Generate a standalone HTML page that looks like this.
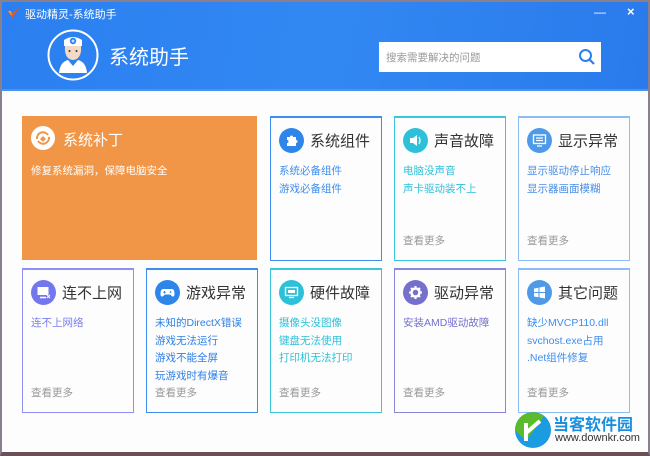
<!DOCTYPE html>
<html><head><meta charset="utf-8"><style>
*{margin:0;padding:0;box-sizing:border-box}
body{width:650px;height:456px;overflow:hidden;background:#fff;font-family:"Liberation Sans","Noto Sans CJK SC",sans-serif;position:relative}
.frame{position:absolute;left:0;top:0;width:650px;height:456px;border:2px solid #8a7f8c;border-bottom:4px solid #6b5058;background:#fdfdfe}
.hdr{position:absolute;left:2px;top:2px;width:646px;height:89px;background:linear-gradient(100deg,#2b7ff0 0%,#3288f3 50%,#2a7aeb 100%);border-bottom:2px solid #4a94f0}
.t{position:absolute;color:#fff}
.card{position:absolute;width:112px;height:145px;border:1.5px solid;border-top-width:2px;background:#fdfdfe}
.card .ic{position:absolute;left:8px;top:10px;width:25px;height:25px;border-radius:50%}
.card .ic svg{position:absolute;left:5px;top:5px}
.card .tt{position:absolute;left:39px;top:12px;font-size:15px;color:#333;white-space:nowrap}
.card .ln{position:absolute;left:8px;top:45px;font-size:10.5px;line-height:17.5px;white-space:nowrap}
.card .more{position:absolute;left:8px;bottom:12px;font-size:10.5px;color:#999}
</style></head><body>
<div class="frame"></div>
<div class="hdr"></div>
<svg style="position:absolute;left:7px;top:7px" width="14" height="12" viewBox="0 0 14 12"><path d="M0 3 L5 11 L13 0 L6 6 Z" fill="#e8541e"/><path d="M1 4 L5 9 L4 4Z" fill="#f6a02a"/></svg>
<div class="t" style="left:25px;top:6px;font-size:11px">驱动精灵-系统助手</div>
<div class="t" style="left:594px;top:5px;font-size:12px">&#8212;</div>
<div class="t" style="left:627px;top:4px;font-size:13px;font-weight:bold">×</div>
<svg style="position:absolute;left:47px;top:29px" width="52" height="52" viewBox="0 0 52 52">
<circle cx="26" cy="26" r="24.5" fill="none" stroke="#fff" stroke-width="2"/>
<path d="M17 11 Q26 5 35 11 L35 17 L17 17Z" fill="#fff"/>
<circle cx="26" cy="12" r="3.2" fill="#2b7ff0"/><path d="M24.5 12h3M26 10.5v3" stroke="#fff" stroke-width="1"/>
<path d="M18 17 L34 17 Q35 30 26 31 Q17 30 18 17Z" fill="#f6d9c4"/>
<circle cx="22.5" cy="22" r="1" fill="#333"/><circle cx="29.5" cy="22" r="1" fill="#333"/>
<path d="M12 44 Q13 33 21 31 L26 37 L31 31 Q39 33 40 44 Z" fill="#fff"/>
</svg>
<div class="t" style="left:109px;top:41px;font-size:20px">系统助手</div>
<div style="position:absolute;left:379px;top:42px;width:222px;height:30px;background:#fff"></div>
<div style="position:absolute;left:386px;top:50px;font-size:10.5px;color:#999">搜索需要解决的问题</div>
<svg style="position:absolute;left:578px;top:48px" width="18" height="18" viewBox="0 0 18 18"><circle cx="7.5" cy="7.5" r="5.5" fill="none" stroke="#2b7ff0" stroke-width="2"/><path d="M11.5 11.5 L16 16" stroke="#2b7ff0" stroke-width="2.2"/></svg>

<div style="position:absolute;left:22px;top:116px;width:235px;height:144px;background:#f19547"></div>
<svg style="position:absolute;left:31px;top:126px" width="24" height="24" viewBox="0 0 24 24"><circle cx="12" cy="12" r="12" fill="#fff"/><path d="M6 13 A6 6 0 0 1 17 9 M18 11 A6 6 0 0 1 7 15" stroke="#f19547" stroke-width="2" fill="none"/><path d="M9 13l3 -3 3 3 -3 3z" fill="#f19547"/></svg>
<div class="t" style="left:63px;top:129px;font-size:15px">系统补丁</div>
<div class="t" style="left:31px;top:163px;font-size:10.5px">修复系统漏洞，保障电脑安全</div>

<div class="card" style="left:270px;top:116px;border-color:#3d8ef0"><div class="ic" style="background:#2d86e8"><svg width="15" height="15" viewBox="0 0 15 15"><path d="M3 4h3a1.5 1.5 0 1 1 3 0h3v3a1.5 1.5 0 1 1 0 3v3H3v-3a1.5 1.5 0 1 0 0-3z" fill="#fff"/></svg></div><div class="tt">系统组件</div><div class="ln" style="color:#3d8ef0">系统必备组件<br>游戏必备组件</div></div>
<div class="card" style="left:394px;top:116px;border-color:#3ac7dc"><div class="ic" style="background:#2ec0d8"><svg width="15" height="15" viewBox="0 0 15 15"><path d="M2 5h3l4-3v11l-4-3H2z" fill="#fff"/><path d="M11 4q2 3.5 0 7" stroke="#fff" stroke-width="1.3" fill="none"/></svg></div><div class="tt">声音故障</div><div class="ln" style="color:#2ec0d8">电脑没声音<br>声卡驱动装不上</div><div class="more">查看更多</div></div>
<div class="card" style="left:518px;top:116px;border-color:#8bbcf5"><div class="ic" style="background:#4f9ae8"><svg width="15" height="15" viewBox="0 0 15 15"><rect x="1.5" y="2" width="12" height="8.5" fill="none" stroke="#fff" stroke-width="1.3"/><path d="M4 5h7M4 7.5h7M5 13h5" stroke="#fff" stroke-width="1.2"/></svg></div><div class="tt">显示异常</div><div class="ln" style="color:#4a8ee6">显示驱动停止响应<br>显示器画面模糊</div><div class="more">查看更多</div></div>

<div class="card" style="left:22px;top:268px;border-color:#8e8ff5"><div class="ic" style="background:#7377ee"><svg width="15" height="15" viewBox="0 0 15 15"><rect x="1.5" y="2" width="11" height="8" fill="#fff"/><path d="M4 12.5h6" stroke="#fff" stroke-width="1.5"/><path d="M11 10l3 3M14 10l-3 3" stroke="#fff" stroke-width="1"/></svg></div><div class="tt">连不上网</div><div class="ln" style="color:#7a7ef0">连不上网络</div><div class="more">查看更多</div></div>
<div class="card" style="left:146px;top:268px;border-color:#3d8ef0"><div class="ic" style="background:#2d86e8"><svg width="15" height="15" viewBox="0 0 15 15"><path d="M3 4h9q2.5 0 2.5 5 0 3-2 2.5L10 9.5H5l-2.5 2q-2 .5-2-2.5Q.5 4 3 4z" fill="#fff"/><path d="M4.5 6v2.5M3.3 7.2h2.4" stroke="#2d86e8" stroke-width="1"/><circle cx="10.5" cy="7" r=".9" fill="#2d86e8"/></svg></div><div class="tt">游戏异常</div><div class="ln" style="color:#2d7fe6">未知的DirectX错误<br>游戏无法运行<br>游戏不能全屏<br>玩游戏时有爆音</div><div class="more">查看更多</div></div>
<div class="card" style="left:270px;top:268px;border-color:#3ac7dc"><div class="ic" style="background:#2ec0d8"><svg width="15" height="15" viewBox="0 0 15 15"><rect x="1.5" y="2.5" width="12" height="8" fill="none" stroke="#fff" stroke-width="1.3"/><rect x="4" y="5" width="7" height="3" fill="#fff"/><path d="M5 12.5h5" stroke="#fff" stroke-width="1.3"/></svg></div><div class="tt">硬件故障</div><div class="ln" style="color:#2ec0d8">摄像头没图像<br>键盘无法使用<br>打印机无法打印</div><div class="more">查看更多</div></div>
<div class="card" style="left:394px;top:268px;border-color:#8a86d8"><div class="ic" style="background:#7470cc"><svg width="15" height="15" viewBox="0 0 15 15"><circle cx="7.5" cy="7.5" r="4" fill="none" stroke="#fff" stroke-width="2.5"/><path d="M7.5 1v3M7.5 11v3M1 7.5h3M11 7.5h3M3 3l2 2M10 10l2 2M12 3l-2 2M3 12l2-2" stroke="#fff" stroke-width="2"/></svg></div><div class="tt">驱动异常</div><div class="ln" style="color:#7470cc">安装AMD驱动故障</div><div class="more">查看更多</div></div>
<div class="card" style="left:518px;top:268px;border-color:#8bbcf5"><div class="ic" style="background:#4f9ae8"><svg width="15" height="15" viewBox="0 0 15 15"><path d="M2 3.5l4.5-.8v4.3H2zM7.5 2.5L13 1.5v5.5H7.5zM2 8h4.5v4.3L2 11.5zM7.5 8H13v5.5l-5.5-1z" fill="#fff"/></svg></div><div class="tt">其它问题</div><div class="ln" style="color:#3d8ef0">缺少MVCP110.dll<br>svchost.exe占用<br>.Net组件修复</div><div class="more">查看更多</div></div>

<svg style="position:absolute;left:514px;top:411px" width="38" height="38" viewBox="0 0 38 38"><circle cx="19" cy="19" r="18" fill="#1b9be0"/><path d="M1 19 A18 18 0 0 1 30 5 L12 30 Z" fill="#5cbb2c"/><path d="M12 12 L12 30 M12 22 L26 10" stroke="#fff" stroke-width="4"/></svg>
<div style="position:absolute;left:553px;top:411px;font-size:16px;font-weight:bold;color:#1a8fe0;white-space:nowrap">当客软件园</div>
<div style="position:absolute;left:555px;top:432px;font-size:11px;color:#333;white-space:nowrap">www.downkr.com</div>
</body></html>
